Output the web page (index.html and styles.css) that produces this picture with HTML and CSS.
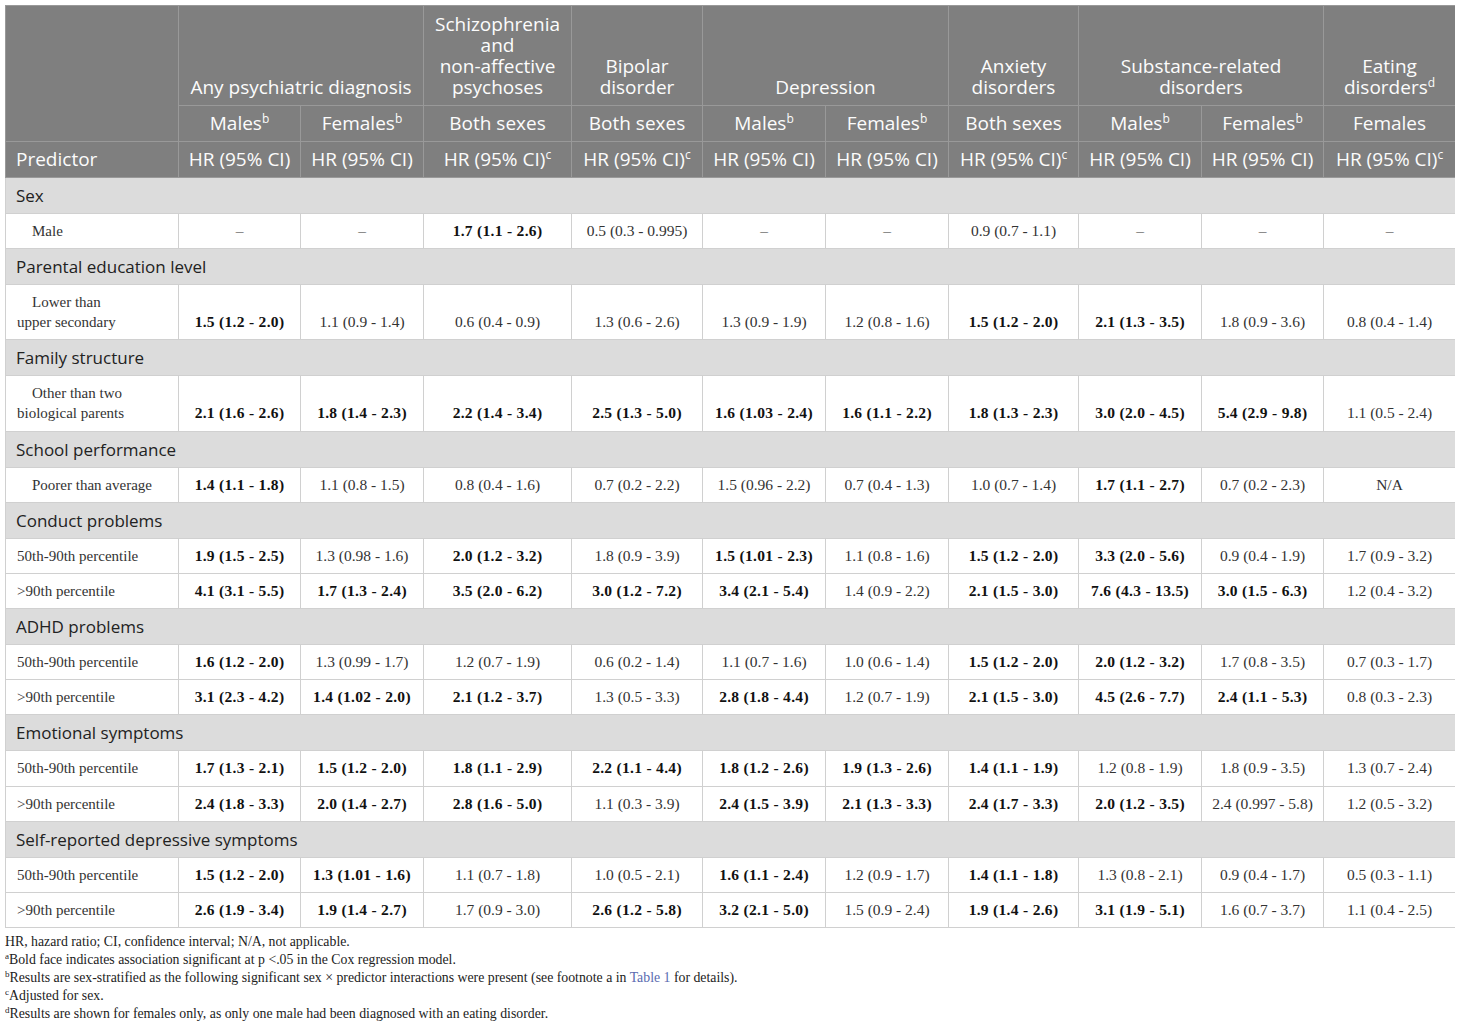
FILE: index.html
```html
<!DOCTYPE html>
<html lang="en">
<head>
    <meta charset="UTF-8">
    <meta name="viewport" content="width=device-width, initial-scale=1.0">
    <title>Table 2 - Predictors of psychiatric diagnoses</title>
    <link rel="stylesheet" href="styles.css">
</head>
<body>
    <table class="hr-table">
        <colgroup>
            <col class="col-pred">
            <col class="col-122"><col class="col-123">
            <col class="col-148">
            <col class="col-131">
            <col class="col-123"><col class="col-123">
            <col class="col-130">
            <col class="col-123"><col class="col-122">
            <col class="col-132">
        </colgroup>
        <thead>
            <tr class="head-top">
                <th rowspan="2"></th>
                <th colspan="2">Any psychiatric diagnosis</th>
                <th>Schizophrenia and <span class="nowrap">non-affective</span> psychoses</th>
                <th>Bipolar disorder</th>
                <th colspan="2">Depression</th>
                <th>Anxiety disorders</th>
                <th colspan="2">Substance-related disorders</th>
                <th>Eating disorders<sup>d</sup></th>
            </tr>
            <tr class="head-sub">
                <th>Males<sup>b</sup></th>
                <th>Females<sup>b</sup></th>
                <th>Both sexes</th>
                <th>Both sexes</th>
                <th>Males<sup>b</sup></th>
                <th>Females<sup>b</sup></th>
                <th>Both sexes</th>
                <th>Males<sup>b</sup></th>
                <th>Females<sup>b</sup></th>
                <th>Females</th>
            </tr>
            <tr class="head-sub">
                <th class="left">Predictor</th>
                <th>HR (95% CI)</th>
                <th>HR (95% CI)</th>
                <th>HR (95% CI)<sup>c</sup></th>
                <th>HR (95% CI)<sup>c</sup></th>
                <th>HR (95% CI)</th>
                <th>HR (95% CI)</th>
                <th>HR (95% CI)<sup>c</sup></th>
                <th>HR (95% CI)</th>
                <th>HR (95% CI)</th>
                <th>HR (95% CI)<sup>c</sup></th>
            </tr>
        </thead>
        <tbody>
            <tr class="section"><td colspan="11">Sex</td></tr>
            <tr>
                <td class="label indent">Male</td>
                <td>–</td><td>–</td><td><b>1.7 (1.1 - 2.6)</b></td><td>0.5 (0.3 - 0.995)</td>
                <td>–</td><td>–</td><td>0.9 (0.7 - 1.1)</td><td>–</td><td>–</td><td>–</td>
            </tr>

            <tr class="section"><td colspan="11">Parental education level</td></tr>
            <tr>
                <td class="label indent">Lower than<br>upper secondary</td>
                <td><b>1.5 (1.2 - 2.0)</b></td><td>1.1 (0.9 - 1.4)</td><td>0.6 (0.4 - 0.9)</td><td>1.3 (0.6 - 2.6)</td>
                <td>1.3 (0.9 - 1.9)</td><td>1.2 (0.8 - 1.6)</td><td><b>1.5 (1.2 - 2.0)</b></td>
                <td><b>2.1 (1.3 - 3.5)</b></td><td>1.8 (0.9 - 3.6)</td><td>0.8 (0.4 - 1.4)</td>
            </tr>

            <tr class="section"><td colspan="11">Family structure</td></tr>
            <tr>
                <td class="label indent">Other than two<br>biological parents</td>
                <td><b>2.1 (1.6 - 2.6)</b></td><td><b>1.8 (1.4 - 2.3)</b></td><td><b>2.2 (1.4 - 3.4)</b></td><td><b>2.5 (1.3 - 5.0)</b></td>
                <td><b>1.6 (1.03 - 2.4)</b></td><td><b>1.6 (1.1 - 2.2)</b></td><td><b>1.8 (1.3 - 2.3)</b></td>
                <td><b>3.0 (2.0 - 4.5)</b></td><td><b>5.4 (2.9 - 9.8)</b></td><td>1.1 (0.5 - 2.4)</td>
            </tr>

            <tr class="section"><td colspan="11">School performance</td></tr>
            <tr>
                <td class="label indent">Poorer than average</td>
                <td><b>1.4 (1.1 - 1.8)</b></td><td>1.1 (0.8 - 1.5)</td><td>0.8 (0.4 - 1.6)</td><td>0.7 (0.2 - 2.2)</td>
                <td>1.5 (0.96 - 2.2)</td><td>0.7 (0.4 - 1.3)</td><td>1.0 (0.7 - 1.4)</td>
                <td><b>1.7 (1.1 - 2.7)</b></td><td>0.7 (0.2 - 2.3)</td><td>N/A</td>
            </tr>

            <tr class="section"><td colspan="11">Conduct problems</td></tr>
            <tr>
                <td class="label">50th-90th percentile</td>
                <td><b>1.9 (1.5 - 2.5)</b></td><td>1.3 (0.98 - 1.6)</td><td><b>2.0 (1.2 - 3.2)</b></td><td>1.8 (0.9 - 3.9)</td>
                <td><b>1.5 (1.01 - 2.3)</b></td><td>1.1 (0.8 - 1.6)</td><td><b>1.5 (1.2 - 2.0)</b></td>
                <td><b>3.3 (2.0 - 5.6)</b></td><td>0.9 (0.4 - 1.9)</td><td>1.7 (0.9 - 3.2)</td>
            </tr>
            <tr>
                <td class="label">&gt;90th percentile</td>
                <td><b>4.1 (3.1 - 5.5)</b></td><td><b>1.7 (1.3 - 2.4)</b></td><td><b>3.5 (2.0 - 6.2)</b></td><td><b>3.0 (1.2 - 7.2)</b></td>
                <td><b>3.4 (2.1 - 5.4)</b></td><td>1.4 (0.9 - 2.2)</td><td><b>2.1 (1.5 - 3.0)</b></td>
                <td><b>7.6 (4.3 - 13.5)</b></td><td><b>3.0 (1.5 - 6.3)</b></td><td>1.2 (0.4 - 3.2)</td>
            </tr>

            <tr class="section"><td colspan="11">ADHD problems</td></tr>
            <tr>
                <td class="label">50th-90th percentile</td>
                <td><b>1.6 (1.2 - 2.0)</b></td><td>1.3 (0.99 - 1.7)</td><td>1.2 (0.7 - 1.9)</td><td>0.6 (0.2 - 1.4)</td>
                <td>1.1 (0.7 - 1.6)</td><td>1.0 (0.6 - 1.4)</td><td><b>1.5 (1.2 - 2.0)</b></td>
                <td><b>2.0 (1.2 - 3.2)</b></td><td>1.7 (0.8 - 3.5)</td><td>0.7 (0.3 - 1.7)</td>
            </tr>
            <tr>
                <td class="label">&gt;90th percentile</td>
                <td><b>3.1 (2.3 - 4.2)</b></td><td><b>1.4 (1.02 - 2.0)</b></td><td><b>2.1 (1.2 - 3.7)</b></td><td>1.3 (0.5 - 3.3)</td>
                <td><b>2.8 (1.8 - 4.4)</b></td><td>1.2 (0.7 - 1.9)</td><td><b>2.1 (1.5 - 3.0)</b></td>
                <td><b>4.5 (2.6 - 7.7)</b></td><td><b>2.4 (1.1 - 5.3)</b></td><td>0.8 (0.3 - 2.3)</td>
            </tr>

            <tr class="section"><td colspan="11">Emotional symptoms</td></tr>
            <tr>
                <td class="label">50th-90th percentile</td>
                <td><b>1.7 (1.3 - 2.1)</b></td><td><b>1.5 (1.2 - 2.0)</b></td><td><b>1.8 (1.1 - 2.9)</b></td><td><b>2.2 (1.1 - 4.4)</b></td>
                <td><b>1.8 (1.2 - 2.6)</b></td><td><b>1.9 (1.3 - 2.6)</b></td><td><b>1.4 (1.1 - 1.9)</b></td>
                <td>1.2 (0.8 - 1.9)</td><td>1.8 (0.9 - 3.5)</td><td>1.3 (0.7 - 2.4)</td>
            </tr>
            <tr>
                <td class="label">&gt;90th percentile</td>
                <td><b>2.4 (1.8 - 3.3)</b></td><td><b>2.0 (1.4 - 2.7)</b></td><td><b>2.8 (1.6 - 5.0)</b></td><td>1.1 (0.3 - 3.9)</td>
                <td><b>2.4 (1.5 - 3.9)</b></td><td><b>2.1 (1.3 - 3.3)</b></td><td><b>2.4 (1.7 - 3.3)</b></td>
                <td><b>2.0 (1.2 - 3.5)</b></td><td>2.4 (0.997 - 5.8)</td><td>1.2 (0.5 - 3.2)</td>
            </tr>

            <tr class="section"><td colspan="11">Self-reported depressive symptoms</td></tr>
            <tr>
                <td class="label">50th-90th percentile</td>
                <td><b>1.5 (1.2 - 2.0)</b></td><td><b>1.3 (1.01 - 1.6)</b></td><td>1.1 (0.7 - 1.8)</td><td>1.0 (0.5 - 2.1)</td>
                <td><b>1.6 (1.1 - 2.4)</b></td><td>1.2 (0.9 - 1.7)</td><td><b>1.4 (1.1 - 1.8)</b></td>
                <td>1.3 (0.8 - 2.1)</td><td>0.9 (0.4 - 1.7)</td><td>0.5 (0.3 - 1.1)</td>
            </tr>
            <tr>
                <td class="label">&gt;90th percentile</td>
                <td><b>2.6 (1.9 - 3.4)</b></td><td><b>1.9 (1.4 - 2.7)</b></td><td>1.7 (0.9 - 3.0)</td><td><b>2.6 (1.2 - 5.8)</b></td>
                <td><b>3.2 (2.1 - 5.0)</b></td><td>1.5 (0.9 - 2.4)</td><td><b>1.9 (1.4 - 2.6)</b></td>
                <td><b>3.1 (1.9 - 5.1)</b></td><td>1.6 (0.7 - 3.7)</td><td>1.1 (0.4 - 2.5)</td>
            </tr>
        </tbody>
    </table>

    <div class="notes">
        <p>HR, hazard ratio; CI, confidence interval; N/A, not applicable.</p>
        <p><sup>a</sup>Bold face indicates association significant at p &lt;.05 in the Cox regression model.</p>
        <p><sup>b</sup>Results are sex-stratified as the following significant sex × predictor interactions were present (see footnote a in <a href="#">Table 1</a> for details).</p>
        <p><sup>c</sup>Adjusted for sex.</p>
        <p><sup>d</sup>Results are shown for females only, as only one male had been diagnosed with an eating disorder.</p>
    </div>
</body>
</html>
```

FILE: styles.css
```css
body {
    margin: 5px;
    background: #fff;
    color: #222;
    font-family: "Liberation Serif", serif;
}
.hr-table {
    width: 1450px;
    table-layout: fixed;
    border-collapse: collapse;
    border: 1px solid #d0d0d0;
}
.col-pred { width: 173px; }
.col-122 { width: 122px; }
.col-123 { width: 123px; }
.col-130 { width: 130px; }
.col-131 { width: 131px; }
.col-132 { width: 132px; }
.col-148 { width: 148px; }
.nowrap { white-space: nowrap; }

/* header */
.hr-table th {
    background: #7f7f7f;
    color: #fcfcfc;
    font-family: "Open Sans", "Noto Sans", sans-serif;
    font-weight: normal;
    font-size: 19px;
    line-height: 21px;
    border: 1px solid #999;
    padding: 7px 6px;
    text-align: center;
    vertical-align: bottom;
}
.hr-table th.left { text-align: left; padding-left: 10px; }
.head-top th { height: 84px; padding-top: 8px; }
.head-sub th { height: 21px; }
.hr-table th sup {
    font-size: 12px;
    line-height: 0;
    vertical-align: 7px;
}

/* body */
.hr-table td {
    border: 1px solid #d0d0d0;
    padding: 7px 8px 7.1px;
    font-size: 15.5px;
    line-height: 20px;
    text-align: center;
    vertical-align: bottom;
    color: #333;
}
.hr-table td b {
    color: #111;
    letter-spacing: 0.3px;
}
.hr-table td.label {
    text-align: left;
    padding-left: 11px;
    font-size: 15px;
}
.hr-table td.indent { text-indent: 15px; }
.hr-table tr.section td {
    background: #dcdcdc;
    color: #222;
    font-family: "Open Sans", "Noto Sans", sans-serif;
    font-size: 17px;
    line-height: 21px;
    text-align: left;
    vertical-align: middle;
    padding-left: 10px;
}

/* footnotes */
.notes {
    margin-top: 5px;
    font-size: 13.8px;
    line-height: 18px;
    color: #222;
}
.notes p { margin: 0; }
.notes sup {
    font-size: 9px;
    line-height: 0;
    vertical-align: 5px;
}
.notes a {
    color: #5a6bb0;
    text-decoration: none;
}
```
